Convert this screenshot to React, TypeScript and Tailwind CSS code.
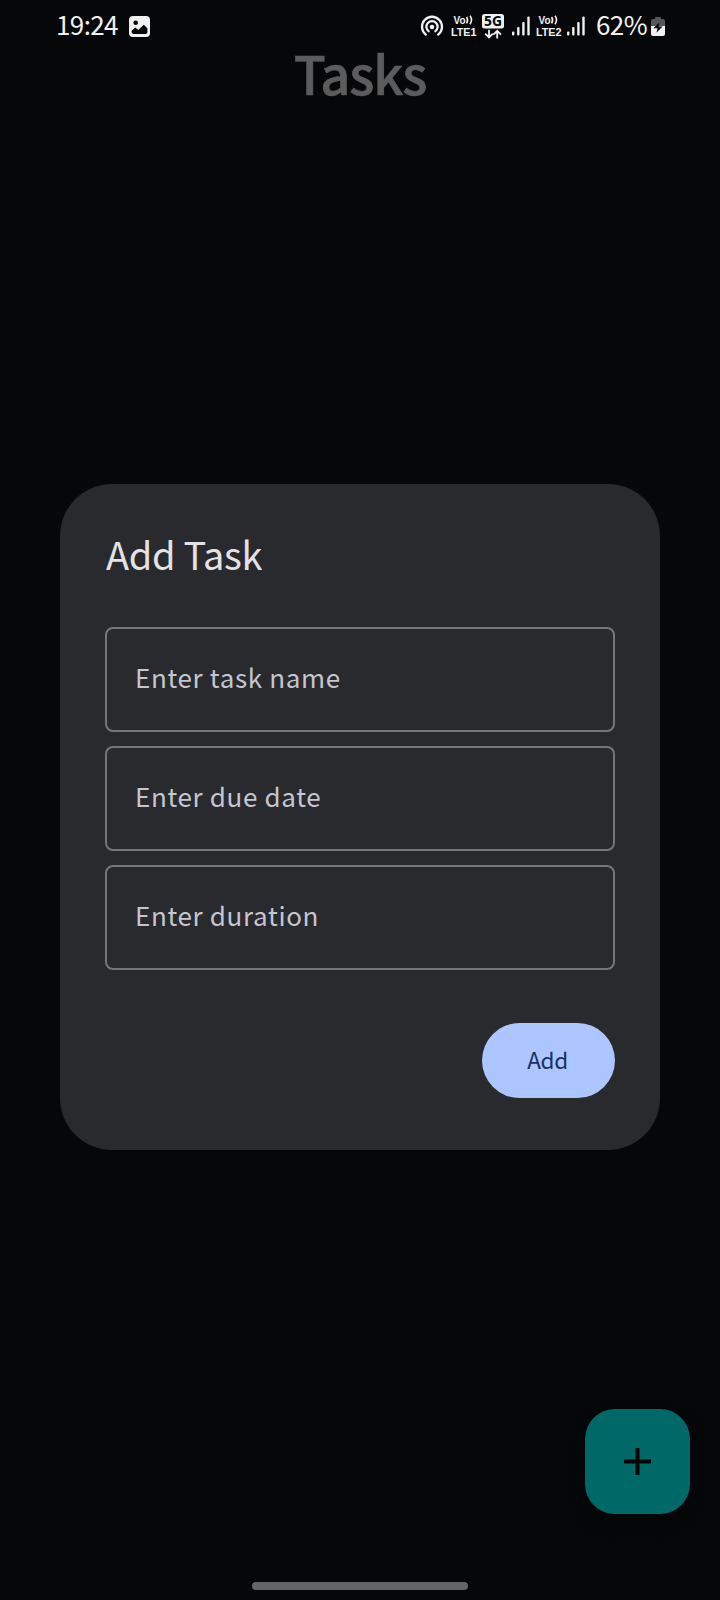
import React from "react";

function PictureIcon() {
  return (
    <svg width="21" height="21" viewBox="0 0 21 21" className="ml-[11px]">
      <rect x="0" y="0" width="21" height="21" rx="4" fill="#f1f1f1" />
      <circle cx="6.7" cy="6.7" r="2.3" fill="#060709" />
      <path d="M2.6 16.2V14.8L6.4 11.4L9.3 14L14.8 8.8L18.4 12.2V16.2Q18.4 18 16.6 18H4.4Q2.6 18 2.6 16.2Z" fill="#060709" />
    </svg>
  );
}

function HotspotIcon() {
  return (
    <svg width="24" height="24" viewBox="0 0 24 24" fill="none" stroke="#f1f1f1" strokeWidth="2.3" strokeLinecap="round">
      <path d="M5.8 20.6A10 10 0 1 1 18.2 20.6" />
      <path d="M8.6 17.2A5.6 5.6 0 1 1 15.4 17.2" />
      <circle cx="12" cy="13" r="2.3" fill="#f1f1f1" stroke="none" />
    </svg>
  );
}

function VolteIcon({ label }: { label: string }) {
  return (
    <svg width="27" height="24" viewBox="0 0 27 24" overflow="visible" fill="#f1f1f1" className="font-['Liberation_Sans',sans-serif]">
      <text x="2.5" y="9.6" fontSize="10" fontWeight="700" textLength="12" lengthAdjust="spacingAndGlyphs">Vo</text>
      <path d="M15.6 3Q17.6 6.2 15.6 9.4M19 1.8Q22 6 19 10.2" fill="none" stroke="#f1f1f1" strokeWidth="1.6" />
      <text x="0" y="21.6" fontSize="11.5" fontWeight="700" textLength="25.5" lengthAdjust="spacingAndGlyphs">{label}</text>
    </svg>
  );
}

function FiveGIcon() {
  return (
    <svg width="22" height="25" viewBox="0 0 22 25" overflow="visible" className="font-['Noto_Sans',sans-serif]">
      <rect width="22" height="14.5" rx="2.5" fill="#f1f1f1" />
      <text x="2" y="12.4" fontSize="14" fontWeight="700" fill="#060709" textLength="18" lengthAdjust="spacingAndGlyphs">5G</text>
      <path d="M7 15.8V23.4M3.2 19.6L7 23.4L10.8 19.6M15.2 24.4V16.8M11.4 20.6L15.2 16.8L19 20.6" fill="none" stroke="#f1f1f1" strokeWidth="1.8" />
    </svg>
  );
}

function SignalIcon() {
  return (
    <svg width="18" height="20" viewBox="0 0 18 20" fill="#f1f1f1">
      <rect x="0" y="15.5" width="2.4" height="4" rx="1" />
      <rect x="5.1" y="11" width="2.4" height="8.5" rx="1" />
      <rect x="10.2" y="6" width="2.4" height="13.5" rx="1" />
      <rect x="15.3" y="0.5" width="2.4" height="19" rx="1" />
    </svg>
  );
}

function BatteryIcon() {
  return (
    <svg width="14" height="19" viewBox="0 0 14 19">
      <path d="M4 2V1Q4 0 5 0H9Q10 0 10 1V2H12Q14 2 14 4V9H0V4Q0 2 2 2Z" fill="#555657" />
      <path d="M0 9H14V17Q14 19 12 19H2Q0 19 0 17Z" fill="#f1f1f1" />
      <path d="M8.4 5.4L2.4 11.2H6.4L5.6 15.4L11.6 9.4H7.6Z" fill="#060709" />
    </svg>
  );
}

function StatusBar() {
  return (
    <header className="flex h-[52px] w-full items-center pl-[56px] pr-[55px] text-[#f1f1f1]">
      <span className="mb-[4px] w-[62px] whitespace-nowrap text-[26px] leading-[32px] tracking-[-0.6px]">19:24</span>
      <PictureIcon />
      <div className="ml-auto flex items-center">
        <HotspotIcon />
        <div className="ml-[7px] flex"><VolteIcon label="LTE1" /></div>
        <div className="ml-[4px] flex"><FiveGIcon /></div>
        <div className="ml-[8px] flex"><SignalIcon /></div>
        <div className="ml-[6px] flex"><VolteIcon label="LTE2" /></div>
        <div className="ml-[4px] flex"><SignalIcon /></div>
        <span className="mb-[4px] ml-[11px] w-[51px] whitespace-nowrap text-[26px] leading-[32px] tracking-[-0.6px]">62%</span>
        <div className="ml-[4px] flex"><BatteryIcon /></div>
      </div>
    </header>
  );
}

function Field({ label }: { label: string }) {
  return (
    <div className="flex h-[105px] items-center rounded-[8px] border-2 border-[#75767b] pb-[6px] pl-[28px]">
      <span className="text-[26px] leading-[36px] tracking-[0.65px] text-[#c5c6d0]">{label}</span>
    </div>
  );
}

export default function App() {
  return (
    <div className="flex h-[1600px] w-[720px] flex-col overflow-hidden bg-[#060709] font-['Noto_Sans_CJK_SC',sans-serif]">
      <StatusBar />
      <h1 className="h-[432px] text-center text-[52.5px] font-medium leading-[41px] tracking-[-1.2px] text-[#5c5c5d] [-webkit-text-stroke:0.6px_#5c5c5d]">Tasks</h1>

      <section className="mx-[60px] flex h-[666px] flex-col rounded-[52px] bg-[#292a2d] px-[45px] pt-[45px]">
        <h2 className="h-[98px] pl-px text-[38px] leading-[49px] tracking-[-0.3px] text-[#e3e2e6]">Add Task</h2>
        <div className="flex flex-col gap-[14px]">
          <Field label="Enter task name" />
          <Field label="Enter due date" />
          <Field label="Enter duration" />
        </div>
        <button className="mt-[53px] h-[75px] w-[133px] self-end rounded-full bg-[#adc6ff] pb-[3px] pr-[2px] text-[22.5px] leading-[32px] tracking-[-0.4px] text-[#163066]">
          Add
        </button>
      </section>

      <button className="mr-[30px] mt-[259px] flex h-[105px] w-[105px] items-center justify-center self-end rounded-[30px] bg-[#006866] shadow-[0_8px_16px_rgba(0,0,0,0.3)]">
        <svg width="27" height="27" viewBox="0 0 27 27" fill="#030404">
          <path d="M11.5 0H15.5V11.5H27V15.5H15.5V27H11.5V15.5H0V11.5H11.5Z" />
        </svg>
      </button>
      <div className="mt-[68px] h-[8px] w-[216px] self-center rounded-full bg-[#646566]" />
    </div>
  );
}
